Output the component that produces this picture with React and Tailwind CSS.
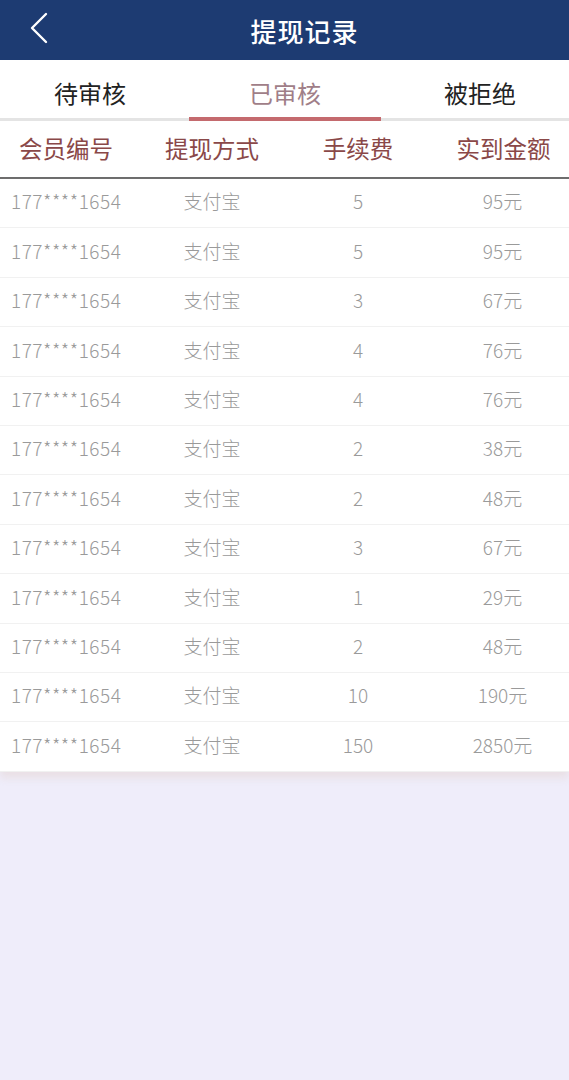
import React from "react";

const rows = [
  ["5", "95元"],
  ["5", "95元"],
  ["3", "67元"],
  ["4", "76元"],
  ["4", "76元"],
  ["2", "38元"],
  ["2", "48元"],
  ["3", "67元"],
  ["1", "29元"],
  ["2", "48元"],
  ["10", "190元"],
  ["150", "2850元"],
];

const font = { fontFamily: '"Noto Sans CJK SC", "Noto Sans", sans-serif' };

export default function App() {
  return (
    <div className="min-h-[1080px] bg-[#efedfa]" style={font}>
      {/* 顶部导航 */}
      <div className="relative flex h-[60px] items-center justify-center bg-[#1d3b72]">
        <svg className="absolute left-[28px] top-[12px]" width="22" height="32" viewBox="0 0 22 32" fill="none">
          <path d="M18 2 L4 16 L18 30" stroke="#ffffff" strokeWidth="2.4" strokeLinecap="round" strokeLinejoin="round" />
        </svg>
        <h1 className="pl-[40px] text-[26px] font-medium tracking-[1px] text-white">提现记录</h1>
      </div>

      {/* 标签 */}
      <div className="grid h-[61px] grid-cols-[180px_210px_1fr] border-b-[3px] border-[#e4e4e4] bg-white">
        <div className="flex items-center justify-center pt-[8px] text-[24px] text-[#222]">待审核</div>
        <div className="relative flex items-center justify-center pt-[8px] text-[24px] text-[#a07e88]">
          已审核
          <div className="absolute bottom-[-3px] left-[9px] right-[9px] h-[4px] bg-[#c46a6e]" />
        </div>
        <div className="flex items-center justify-center pl-[1px] pt-[8px] text-[24px] text-[#222]">被拒绝</div>
      </div>

      {/* 表头 */}
      <div className="grid h-[58px] grid-cols-[132px_160px_132px_1fr] border-b-2 border-[#6b6b6b] bg-white text-[23.5px] text-[#8a4848]">
        <div className="flex items-center justify-center">会员编号</div>
        <div className="flex items-center justify-center">提现方式</div>
        <div className="flex items-center justify-center">手续费</div>
        <div className="flex items-center justify-center pl-[14px]">实到金额</div>
      </div>

      {/* 列表 */}
      <div className="bg-white shadow-[0_6px_8px_rgba(230,215,215,0.6)]">
        {rows.map(([fee, amount], i) => (
          <div
            key={i}
            className="grid h-[49.4px] grid-cols-[132px_160px_132px_1fr] border-b border-[#f1f1f1] pb-[3px] text-[19px] font-light text-[#9a9a9a]"
          >
            <div className="flex items-center pl-[11px] tracking-[0.5px]">177****1654</div>
            <div className="flex items-center justify-center">支付宝</div>
            <div className="flex items-center justify-center">{fee}</div>
            <div className="flex items-center justify-center pl-[12px]">{amount}</div>
          </div>
        ))}
      </div>
    </div>
  );
}
